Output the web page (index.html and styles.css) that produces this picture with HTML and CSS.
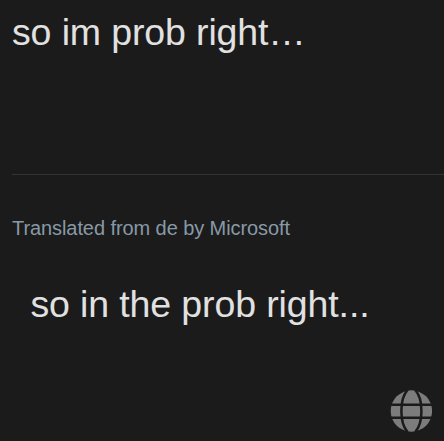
FILE: index.html
```html
<!DOCTYPE html>
<html lang="en"><head><meta charset="utf-8"><title>Translation</title><link rel="stylesheet" href="styles.css"></head>
<body><main class="card">
<p class="original">so im prob right…</p>
<section class="translation"><p class="source">Translated from de by Microsoft</p><p class="result">so in the prob right...</p></section>
<svg class="globe" viewBox="0 0 42 42" fill="none" stroke="#1b1b1b" stroke-width="2.5"><circle cx="21.4" cy="21" r="20.7" fill="#7c7c7c" stroke="none"/><path d="M17.6 0C9.3 9 9.3 33 17.6 42M25.2 0C33.5 9 33.5 33 25.2 42M0 14.7h42M0 27.8h42"/></svg>
</main></body></html>
```
FILE: styles.css
```css
* { box-sizing: border-box; }
body { margin: 0; background: #1b1b1b; font-family: "Liberation Sans", Arial, sans-serif; }
p { margin: 0; white-space: nowrap; }
.card { height: 441px; padding-left: 12px; display: flex; flex-direction: column; overflow: hidden; }
.original { height: 174px; padding-top: 10px; font-size: 37.5px; line-height: 44px; letter-spacing: -0.13px; color: #e1e1e1; }
.translation { height: 216px; border-top: 1px solid #343434; padding-top: 41px; }
.source { font-size: 20px; line-height: 24px; letter-spacing: -0.08px; color: #8899a6; }
.result { margin: 42px 0 0 18.4px; font-size: 37.5px; line-height: 44px; letter-spacing: -0.12px; color: #e1e1e1; }
.globe { width: 42px; height: 42px; margin: 0 12px 0 auto; flex: none; }
```
